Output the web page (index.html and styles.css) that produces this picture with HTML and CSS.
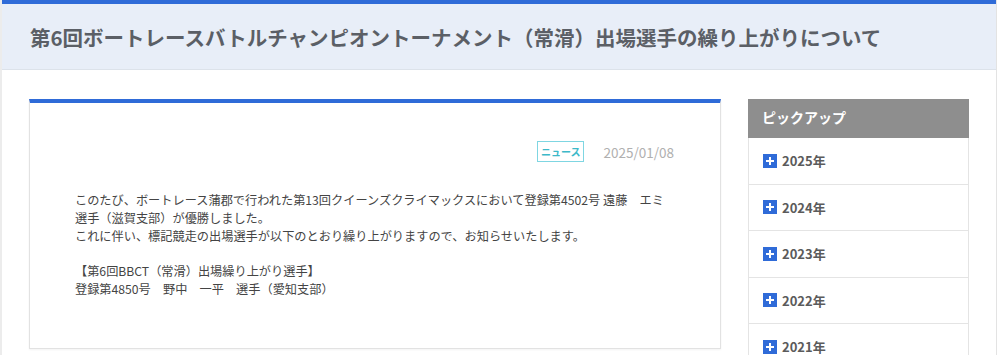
FILE: index.html
```html
<!DOCTYPE html>
<html lang="ja">
<head>
  <meta charset="UTF-8">
  <meta name="viewport" content="width=device-width, initial-scale=1.0">
  <title>第6回ボートレースバトルチャンピオントーナメント（常滑）出場選手の繰り上がりについて</title>
  <link rel="stylesheet" href="styles.css">
</head>
<body>
  <div class="page">
    <div class="page-header">
      <h1>第6回ボートレースバトルチャンピオントーナメント（常滑）出場選手の繰り上がりについて</h1>
    </div>

    <div class="main">
      <div class="article">
        <div class="meta">
          <span class="tag">ニュース</span>
          <span class="date">2025/01/08</span>
        </div>
        <div class="body">
          <p>このたび、ボートレース蒲郡で行われた第13回クイーンズクライマックスにおいて登録第4502号 遠藤　エミ<br>選手（滋賀支部）が優勝しました。<br>これに伴い、標記競走の出場選手が以下のとおり繰り上がりますので、お知らせいたします。</p>
          <p>【第6回BBCT（常滑）出場繰り上がり選手】<br>登録第4850号　野中　一平　選手（愛知支部）</p>
        </div>
      </div>

      <div class="side">
        <div class="side-title">ピックアップ</div>
        <ul class="years">
          <li><span class="plus"></span>2025年</li>
          <li><span class="plus"></span>2024年</li>
          <li><span class="plus"></span>2023年</li>
          <li><span class="plus"></span>2022年</li>
          <li><span class="plus"></span>2021年</li>
        </ul>
      </div>
    </div>
  </div>
</body>
</html>
```

FILE: styles.css
```css
body {
  margin: 0;
  font-family: "Noto Sans CJK JP", "Noto Sans", sans-serif;
  color: #444;
  background: #fff;
}
.page {
  width: 994px;
  border-left: 2px solid #ececec;
  border-right: 1px solid #e3e3e3;
  height: 355px;
  overflow: hidden;
}
.page-header {
  border-top: 4px solid #2f6bd8;
  background: #e8eef8;
  height: 65px;
  border-bottom: 1px solid #dce2ea;
  padding-left: 28px;
  display: flex;
  align-items: center;
}
.page-header h1 {
  margin: 0;
  font-size: 20.5px;
  font-weight: 700;
  color: #5b5f66;
  white-space: nowrap;
}
.main {
  display: flex;
  align-items: flex-start;
  gap: 27px;
  padding: 29px 0 0 27px;
}
.article {
  width: 692px;
  height: 250px;
  border: 1px solid #e2e2e2;
  border-top: 4px solid #2f6bd8;
  padding: 38px 46px 0 45px;
  box-sizing: border-box;
  box-shadow: 0 1px 2px rgba(0, 0, 0, 0.05);
}
.meta {
  display: flex;
  justify-content: flex-end;
  align-items: center;
  gap: 19px;
}
.tag {
  border: 1px solid #7fd6e2;
  color: #3cb9c9;
  font-size: 10px;
  font-weight: 700;
  padding: 3px 3px;
  line-height: 13px;
}
.date {
  color: #b0b0b0;
  font-size: 13.5px;
}
.body {
  padding-top: 29px;
}
.body p {
  margin: 0 0 17px;
  font-size: 12.2px;
  line-height: 18px;
  color: #444;
  white-space: nowrap;
}
.side {
  width: 221px;
}
.side-title {
  background: #8e8e8e;
  color: #fff;
  font-weight: 700;
  font-size: 14px;
  height: 39px;
  line-height: 37px;
  padding-left: 14px;
}
.years {
  list-style: none;
  margin: 0;
  padding: 0;
  border-left: 1px solid #e4e4e4;
  border-right: 1px solid #e4e4e4;
}
.years li {
  height: 45.5px;
  border-bottom: 1px solid #e4e4e4;
  display: flex;
  align-items: center;
  padding-left: 14px;
  font-size: 13px;
  font-weight: 700;
  color: #5b5b5b;
}
.plus {
  width: 14px;
  height: 14px;
  background: #2f6bd8;
  margin-right: 5px;
  position: relative;
  flex: none;
}
.plus::before,
.plus::after {
  content: "";
  position: absolute;
  background: #fff;
}
.plus::before {
  left: 3px;
  top: 6px;
  width: 8px;
  height: 2px;
}
.plus::after {
  left: 6px;
  top: 3px;
  width: 2px;
  height: 8px;
}
```
